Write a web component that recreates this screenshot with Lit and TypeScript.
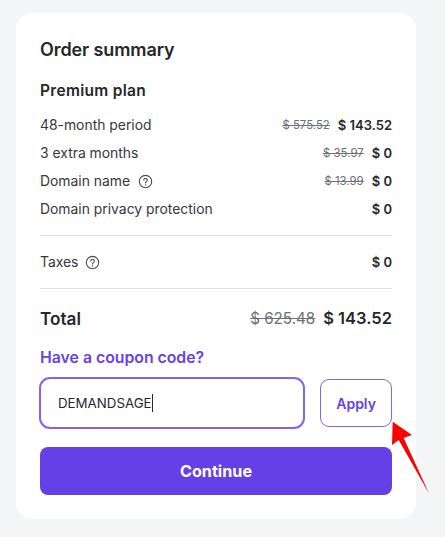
import { LitElement, html, css, svg } from "lit";
import { customElement } from "lit/decorators.js";

const help = svg`<svg class="help" viewBox="0 0 16 16" width="15" height="15" fill="none" stroke="#4a4a55" stroke-width="1.2"><circle cx="8" cy="8" r="6.6"/><path d="M6.2 6.4a1.85 1.85 0 1 1 2.9 1.5c-.7.45-1.1.8-1.1 1.6" stroke-linecap="round"/><circle cx="8" cy="11.6" r=".75" fill="#4a4a55" stroke="none"/></svg>`;

@customElement("app-root")
export class AppRoot extends LitElement {
  static styles = css`
    :host { display: block; width: 445px; height: 537px; background: #f4f5f7; font-family: "Inter", "Liberation Sans", sans-serif; color: #2f3036; overflow: hidden; position: relative; }
    .page { padding: 13px 29px 18px 16px; }
    .card { background: #fff; border-radius: 16px; padding: 24px; height: 506px; box-sizing: border-box; display: flex; flex-direction: column; }
    h1 { margin: 0; font-size: 18px; line-height: 26px; font-weight: 600; color: #26272c; letter-spacing: -0.1px; }
    h2 { margin: 15px 0 0; font-size: 15.5px; line-height: 25px; font-weight: 600; color: #26272c; letter-spacing: 0.3px; }
    .rows { margin-top: 8px; display: flex; flex-direction: column; }
    .row { display: flex; justify-content: space-between; align-items: center; height: 28px; font-size: 13.9px; color: #36373d; }
    .label { display: flex; align-items: center; gap: 8px; }
    .tax .label { gap: 6.5px; }
    .help { display: block; }
    .prices { display: flex; align-items: center; gap: 8px; }
    s { color: #6d7079; font-size: 11.4px; }
    b { font-weight: 600; color: #26272c; font-size: 13px; }
    hr { border: 0; height: 1px; background: #dedfe2; margin: 0; }
    .d1 { margin-top: 12px; }
    .tax { margin: 12px 0; }
    .total { display: flex; justify-content: space-between; align-items: center; height: 28px; margin-top: 15px; font-weight: 600; font-size: 17.2px; color: #26272c; }
    .total s { font-size: 15.2px; font-weight: 400; }
    .total .prices { gap: 8px; }
    .total b { font-size: 16.5px; }
    .coupon { margin-top: 15px; font-size: 15.8px; line-height: 22px; font-weight: 600; color: #6741e6; }
    .form { display: flex; align-items: center; margin: 8px 0 0 -1.5px; gap: 15px; }
    .input { width: 267px; height: 52px; box-sizing: border-box; border: 2px solid #7b68f0; border-radius: 11px; display: flex; align-items: center; padding-left: 17.5px; font-size: 13.3px; color: #26272c; }
    .caret { width: 1px; height: 18px; background: #26272c; }
    .apply { width: 72px; height: 48px; box-sizing: border-box; border: 1px solid #7b68f0; border-radius: 9px; background: #fff; color: #6741e6; font: 600 14px "Inter", sans-serif; padding: 0; }
    .cont { margin-top: 18px; height: 48px; border: 0; border-radius: 8px; background: #6540e6; color: #fff; font: 700 16.2px "Inter", sans-serif; padding: 0; }
    .arrow { position: absolute; left: 388px; top: 419px; }
  `;

  render() {
    return html`<div class="page"><div class="card">
      <h1>Order summary</h1>
      <h2>Premium plan</h2>
      <div class="rows">
        <div class="row"><span>48-month period</span><span class="prices"><s>$ 575.52</s><b>$ 143.52</b></span></div>
        <div class="row"><span>3 extra months</span><span class="prices"><s>$ 35.97</s><b>$ 0</b></span></div>
        <div class="row"><span class="label">Domain name ${help}</span><span class="prices"><s>$ 13.99</s><b>$ 0</b></span></div>
        <div class="row"><span>Domain privacy protection</span><span class="prices"><b>$ 0</b></span></div>
      </div>
      <hr class="d1" />
      <div class="row tax"><span class="label">Taxes ${help}</span><span class="prices"><b>$ 0</b></span></div>
      <hr />
      <div class="total"><span>Total</span><span class="prices"><s>$ 625.48</s><b>$ 143.52</b></span></div>
      <div class="coupon">Have a coupon code?</div>
      <div class="form">
        <div class="input">DEMANDSAGE<span class="caret"></span></div>
        <button class="apply">Apply</button>
      </div>
      <button class="cont">Continue</button>
    </div></div>
    <svg class="arrow" width="44" height="80" viewBox="0 0 44 80"><path d="M4.7 2.7 L24 16 L15.7 19 L41.3 75 L10.7 21 L4 26 Z" fill="#ff0000"/></svg>`;
  }
}
